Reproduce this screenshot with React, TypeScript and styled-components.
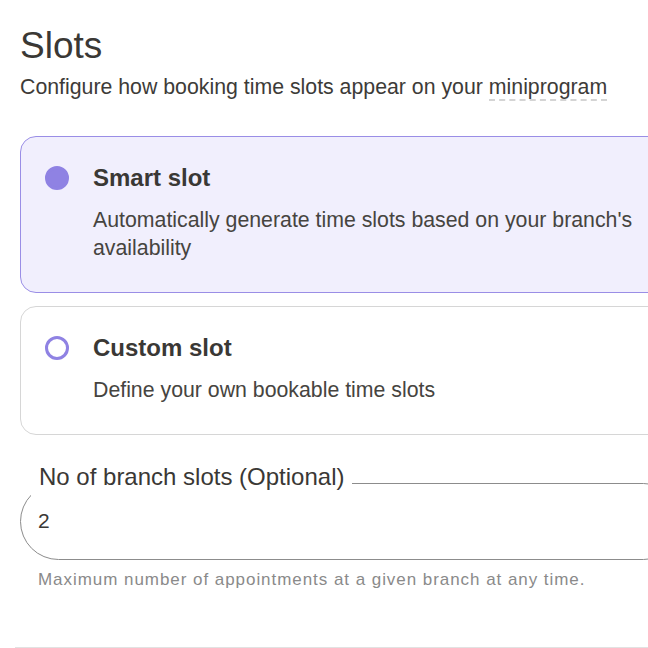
import React, { useState } from "react";
import styled, { createGlobalStyle } from "styled-components";

const GlobalStyle = createGlobalStyle`
  html, body {
    margin: 0;
    padding: 0;
    background: #ffffff;
    overflow: hidden;
  }
  body {
    font-family: "Liberation Sans", Arial, sans-serif;
    color: #3b3936;
  }
`;

type SlotOption = {
  id: string;
  title: string;
  description: string;
};

const options: SlotOption[] = [
  {
    id: "smart",
    title: "Smart slot",
    description:
      "Automatically generate time slots based on your branch's availability",
  },
  {
    id: "custom",
    title: "Custom slot",
    description: "Define your own bookable time slots",
  },
];

export default function App() {
  const [selected, setSelected] = useState("smart");
  const [slots, setSlots] = useState("2");

  return (
    <Page>
      <GlobalStyle />
      <Section>
        <Title>Slots</Title>
        <Subtitle>
          Configure how booking time slots appear on your{" "}
          <Dotted>miniprogram</Dotted>
        </Subtitle>

        <OptionList>
          {options.map((opt) => (
            <OptionCard
              key={opt.id}
              $active={selected === opt.id}
              onClick={() => setSelected(opt.id)}
            >
              <Radio $active={selected === opt.id} />
              <OptionBody>
                <OptionTitle>{opt.title}</OptionTitle>
                <OptionText>{opt.description}</OptionText>
              </OptionBody>
            </OptionCard>
          ))}
        </OptionList>

        <Field>
          <Legend>No of branch slots (Optional)</Legend>
          <Input value={slots} onChange={(e) => setSlots(e.target.value)} />
        </Field>
        <Helper>Maximum number of appointments at a given branch at any time.</Helper>
      </Section>
      <Divider />
    </Page>
  );
}

const Page = styled.div`
  width: 648px;
  height: 648px;
  overflow: hidden;
  display: flex;
  flex-direction: column;
`;

const Section = styled.div`
  width: 662px;
  padding: 24px 0 0 20px;
  display: flex;
  flex-direction: column;
`;

const Title = styled.h1`
  margin: 0;
  font-size: 37px;
  line-height: 44px;
  font-weight: 400;
  color: #3a3835;
`;

const Subtitle = styled.p`
  margin: 5px 0 0;
  font-size: 21.3px;
  line-height: 28px;
  color: #3d3b38;
`;

const Dotted = styled.span`
  border-bottom: 2px dashed #d4d4d4;
`;

const OptionList = styled.div`
  margin-top: 35px;
  display: flex;
  flex-direction: column;
  gap: 13px;
`;

const OptionCard = styled.div<{ $active: boolean }>`
  display: flex;
  align-items: flex-start;
  gap: 24px;
  padding: 28px 24px 30px 24px;
  border-radius: 16px;
  border: 1px solid ${(p) => (p.$active ? "#9a8ee6" : "#d6d6d6")};
  background: ${(p) => (p.$active ? "#f1effd" : "#ffffff")};
  cursor: pointer;
`;

const Radio = styled.span<{ $active: boolean }>`
  flex: none;
  box-sizing: border-box;
  width: 24px;
  height: 24px;
  margin-top: 1px;
  border-radius: 50%;
  border: 3px solid #8f82e3;
  background: ${(p) => (p.$active ? "#8f82e3" : "transparent")};
`;

const OptionBody = styled.div`
  display: flex;
  flex-direction: column;
  gap: 15px;
`;

const OptionTitle = styled.div`
  font-size: 24px;
  line-height: 26px;
  font-weight: 700;
  color: #3a3835;
`;

const OptionText = styled.div`
  font-size: 21.3px;
  line-height: 28px;
  color: #464440;
`;

const Field = styled.fieldset`
  margin: 28px 0 0;
  padding: 0 10px 20px;
  border: 1px solid #8c8c8c;
  border-radius: 40px;
`;

const Legend = styled.legend`
  padding: 0 8px 12px;
  font-size: 24px;
  line-height: 28px;
  color: #3a3835;
`;

const Input = styled.input`
  display: block;
  width: 100%;
  box-sizing: border-box;
  height: 36px;
  padding: 0 7px;
  border: none;
  outline: none;
  background: transparent;
  font-family: "Liberation Sans", Arial, sans-serif;
  font-size: 21px;
  color: #3a3835;
`;

const Helper = styled.div`
  margin: 10px 0 0 18px;
  font-size: 17px;
  line-height: 20px;
  letter-spacing: 0.95px;
  color: #8a8a8a;
`;

const Divider = styled.div`
  margin: auto 0 0 15px;
  height: 1px;
  background: #e2e2e2;
`;
